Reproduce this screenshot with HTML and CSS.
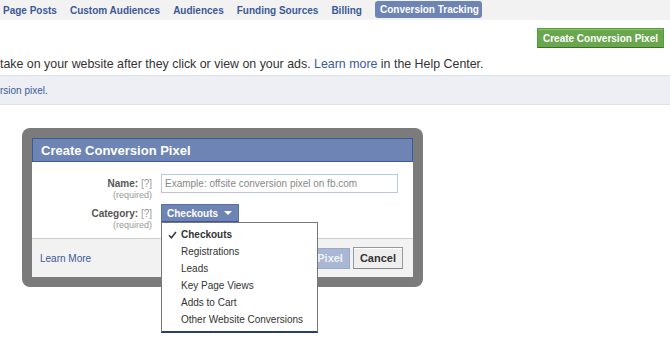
FILE: index.html
```html
<!DOCTYPE html>
<html lang="en">

<head>
    <meta charset="UTF-8">
    <title>Conversion Tracking</title>
    <link rel="stylesheet" href="styles.css">
</head>

<body>
    <div class="topnav">
        <a href="#">Page Posts</a>
        <a href="#">Custom Audiences</a>
        <a href="#">Audiences</a>
        <a href="#">Funding Sources</a>
        <a href="#">Billing</a>
        <a href="#" class="active">Conversion Tracking</a>
    </div>

    <div class="actions">
        <button type="button" class="btn-green">Create Conversion Pixel</button>
    </div>

    <p class="intro">take on your website after they click or view on your ads. <a href="#">Learn more</a> in the Help Center.</p>

    <div class="notice">rsion pixel.</div>

    <div class="dialog">
        <div class="dialog-inner">
            <div class="dialog-title">Create Conversion Pixel</div>
            <div class="dialog-body">
                <div class="field-label">
                    <div><b>Name:</b> <span class="help">[?]</span></div>
                    <div class="required">(required)</div>
                </div>
                <div class="field">
                    <input type="text" class="text-input" placeholder="Example: offsite conversion pixel on fb.com">
                </div>

                <div class="field-label">
                    <div><b>Category:</b> <span class="help">[?]</span></div>
                    <div class="required">(required)</div>
                </div>
                <div class="field">
                    <div class="select">
                        <button type="button" class="select-btn">Checkouts <span class="caret"></span></button>
                        <ul class="menu">
                            <li class="checked">
                                <svg class="check" width="9" height="8" viewBox="0 0 9 8"><path d="M1 4.2 L3.4 6.8 L8 1" fill="none" stroke="#333" stroke-width="1.4"/></svg>
                                Checkouts
                            </li>
                            <li>Registrations</li>
                            <li>Leads</li>
                            <li>Key Page Views</li>
                            <li>Adds to Cart</li>
                            <li>Other Website Conversions</li>
                        </ul>
                    </div>
                </div>
            </div>
            <div class="dialog-footer">
                <a href="#">Learn More</a>
                <div class="footer-buttons">
                    <button type="button" class="btn-disabled">Create Pixel</button>
                    <button type="button" class="btn-cancel">Cancel</button>
                </div>
            </div>
        </div>
    </div>
</body>

</html>
```

FILE: styles.css
```css
/* global */
html {
    background-color: #fff;
}

body {
    font-family: "Liberation Sans", Arial, sans-serif;
    font-size: 10px;
    color: #333;
    background-color: #fff;
    margin: 0;
    padding: 0;
    min-height: 344px;
}

a {
    color: #3b5998;
    text-decoration: none;
}

button {
    font-family: inherit;
    cursor: pointer;
}

/* top tabs */
.topnav {
    height: 20px;
    background-color: #f2f2f2;
    display: flex;
    align-items: center;
    gap: 13px;
    padding-left: 3px;
}

.topnav a {
    font-weight: bold;
    font-size: 10px;
    line-height: 17px;
}

.topnav a.active {
    background-color: #6d84b4;
    color: #fff;
    padding: 0 3px 0 5px;
    border-radius: 3px;
    margin-top: -1px;
}

/* green button */
.actions {
    display: flex;
    justify-content: flex-end;
    padding: 8px 6px 0 0;
}

.btn-green {
    height: 20px;
    padding: 0 5px;
    background-color: #69a74e;
    border: 1px solid #529e36;
    border-bottom-color: #3b6e22;
    box-shadow: inset 0 1px 0 #8ac06f;
    color: #fff;
    font-weight: bold;
    font-size: 10px;
}

/* intro */
.intro {
    margin: 8px 0 0;
    font-size: 12.4px;
    line-height: 16px;
}

.notice {
    margin-top: 3px;
    height: 28px;
    line-height: 30px;
    background-color: #edeff4;
    border-top: 1px solid #dde1ea;
    border-bottom: 1px solid #dde1ea;
    color: #3b5998;
}

/* dialog */
.dialog {
    width: 381px;
    margin: 23px 0 0 22px;
    padding: 10px;
    background-color: #7b7b7b;
    border-radius: 8px;
}

.dialog-inner {
    background-color: #fff;
}

.dialog-title {
    height: 22px;
    line-height: 23px;
    padding-left: 8px;
    background-color: #6d84b4;
    border: 1px solid #3b5998;
    color: #fff;
    font-size: 13px;
    font-weight: bold;
}

.dialog-body {
    display: grid;
    grid-template-columns: 120px 1fr;
    column-gap: 9px;
    row-gap: 4px;
    padding: 12px 0 8px;
}

.field-label {
    text-align: right;
    padding-top: 3px;
    line-height: 13px;
    color: #555;
}

.help {
    color: #999;
}

.required {
    font-size: 9px;
    line-height: 10px;
    color: #999;
}

.text-input {
    width: 237px;
    height: 19px;
    box-sizing: border-box;
    border: 1px solid #bdc7d8;
    padding: 0 3px;
    font-family: inherit;
    font-size: 10px;
    color: #333;
    outline: none;
}

.text-input::placeholder {
    color: #888;
}

/* category dropdown */
.select {
    position: relative;
    display: inline-block;
}

.select-btn {
    display: flex;
    align-items: center;
    gap: 5px;
    height: 18px;
    padding: 0 6px 0 5px;
    background-color: #6d84b4;
    border: 1px solid #5973a9;
    border-bottom-color: #3b5998;
    color: #fff;
    font-weight: bold;
    font-size: 10px;
}

.caret {
    width: 0;
    height: 0;
    border-left: 4px solid transparent;
    border-right: 4px solid transparent;
    border-top: 4px solid #fff;
    margin-left: 1px;
}

.menu {
    position: absolute;
    top: 18px;
    left: 0;
    z-index: 10;
    width: 155px;
    margin: 0;
    padding: 3px 0;
    list-style: none;
    background-color: #fff;
    border: 1px solid #777;
    border-bottom: 2px solid #293e6a;
}

.menu li {
    position: relative;
    height: 17px;
    line-height: 17px;
    padding-left: 19px;
    color: #333;
    white-space: nowrap;
}

.menu li.checked {
    font-weight: bold;
}

.menu .check {
    position: absolute;
    left: 6px;
    top: 5px;
}

/* footer */
.dialog-footer {
    height: 38px;
    border-top: 1px solid #ccc;
    background-color: #f2f2f2;
    display: flex;
    align-items: center;
    justify-content: space-between;
    padding: 0 10px 0 8px;
}

.footer-buttons {
    display: flex;
    align-items: center;
    gap: 3px;
}

.btn-disabled {
    height: 21px;
    padding: 0 6px;
    background-color: #a9b7d4;
    border: 1px solid #9aa9c8;
    color: #eef1f7;
    font-weight: bold;
    font-size: 11px;
}

.btn-cancel {
    height: 22px;
    padding: 0 6px;
    background-color: #eee;
    border: 1px solid #999;
    border-bottom-color: #888;
    box-shadow: inset 0 1px 0 #fff;
    color: #333;
    font-weight: bold;
    font-size: 11px;
}
```
